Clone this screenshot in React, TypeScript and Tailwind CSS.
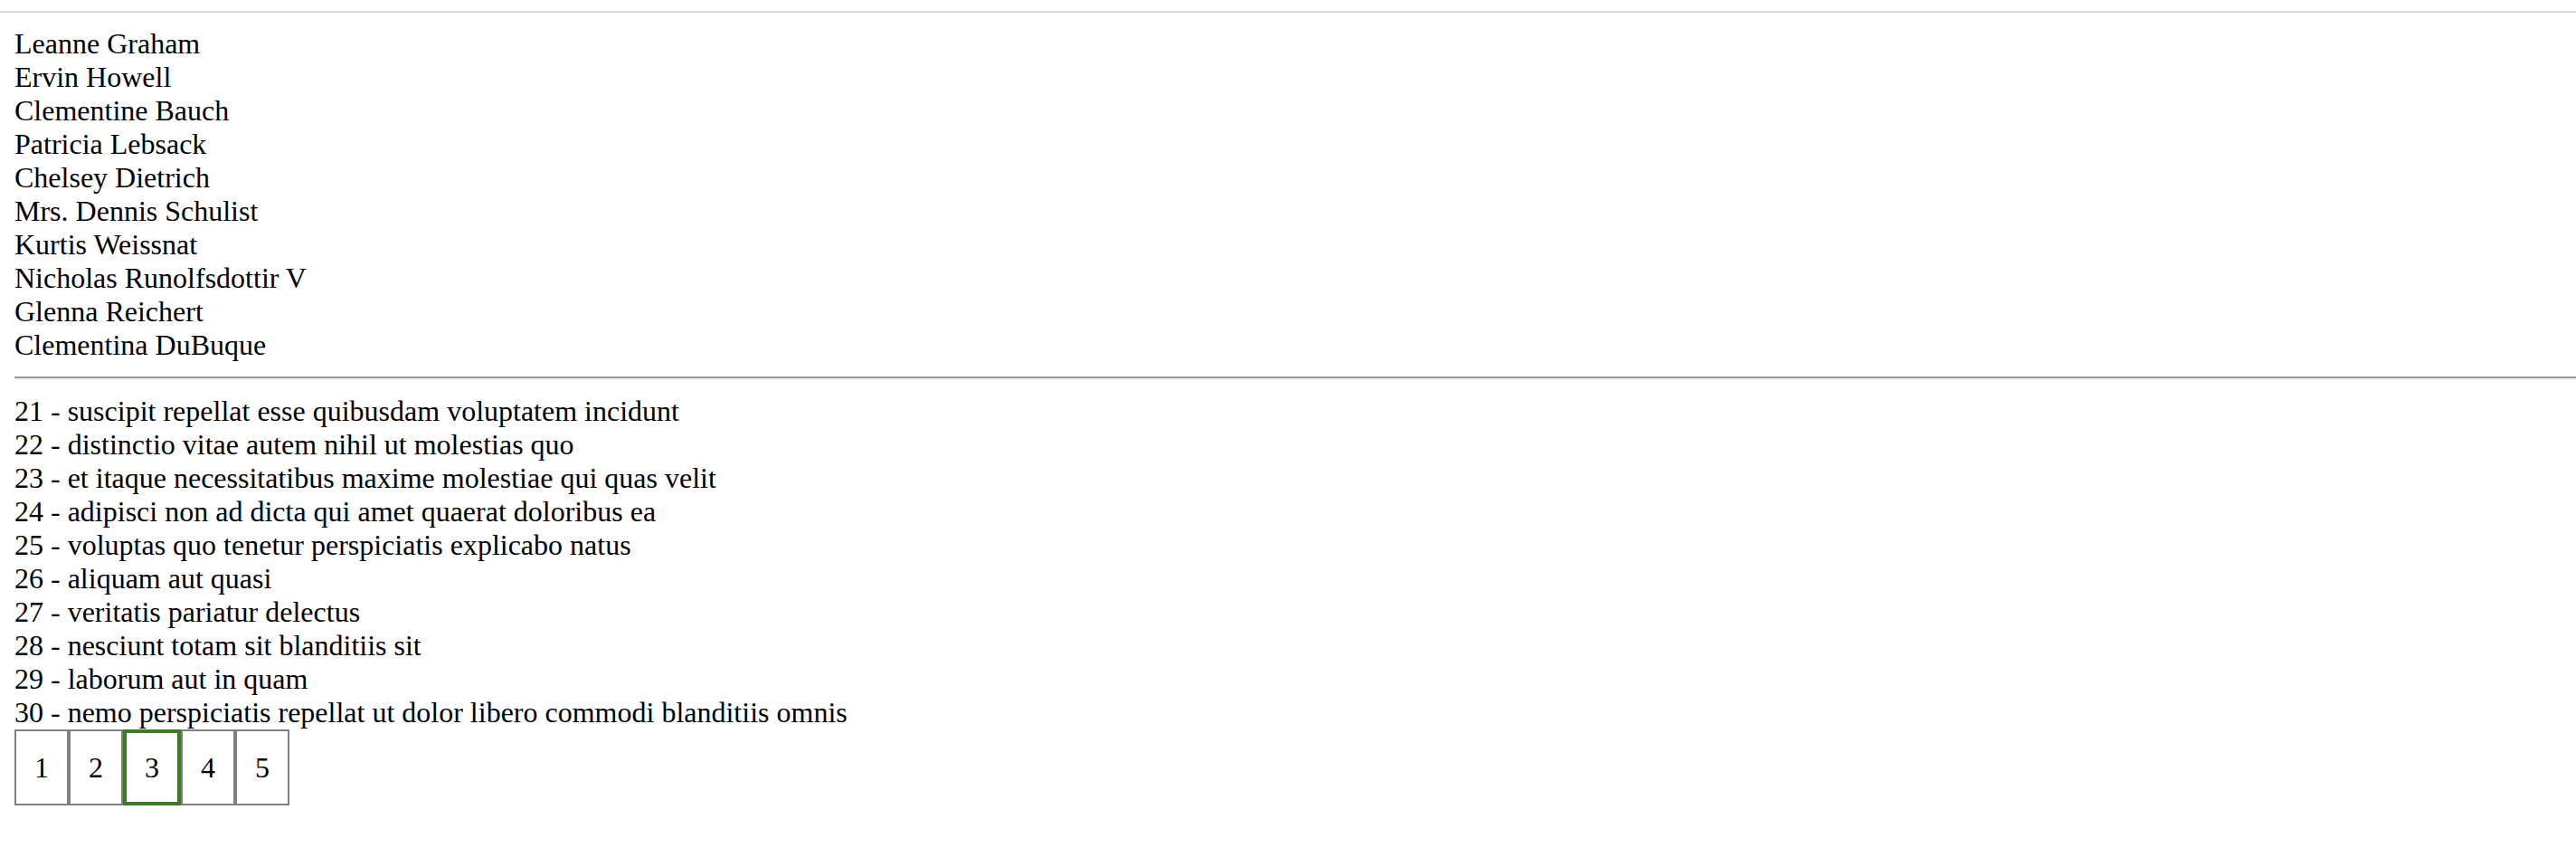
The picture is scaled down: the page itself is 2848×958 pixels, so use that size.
const users = [
  "Leanne Graham",
  "Ervin Howell",
  "Clementine Bauch",
  "Patricia Lebsack",
  "Chelsey Dietrich",
  "Mrs. Dennis Schulist",
  "Kurtis Weissnat",
  "Nicholas Runolfsdottir V",
  "Glenna Reichert",
  "Clementina DuBuque",
];

const posts = [
  { id: 21, title: "suscipit repellat esse quibusdam voluptatem incidunt" },
  { id: 22, title: "distinctio vitae autem nihil ut molestias quo" },
  { id: 23, title: "et itaque necessitatibus maxime molestiae qui quas velit" },
  { id: 24, title: "adipisci non ad dicta qui amet quaerat doloribus ea" },
  { id: 25, title: "voluptas quo tenetur perspiciatis explicabo natus" },
  { id: 26, title: "aliquam aut quasi" },
  { id: 27, title: "veritatis pariatur delectus" },
  { id: 28, title: "nesciunt totam sit blanditiis sit" },
  { id: 29, title: "laborum aut in quam" },
  { id: 30, title: "nemo perspiciatis repellat ut dolor libero commodi blanditiis omnis" },
];

const pages = [1, 2, 3, 4, 5];
const currentPage = 3;

export default function App() {
  return (
    <div className="min-h-screen bg-white font-['Liberation_Serif','Times_New_Roman',serif] text-[32px] leading-[37px] text-black">
      <div className="h-[14px] border-b-2 border-[#dadada]" />
      <div className="mt-4 pl-4">
        <ul>
          {users.map((name) => (
            <li key={name}>{name}</li>
          ))}
        </ul>
        <div className="my-4 border-t-2 border-b-2 border-t-[#9a9a9a] border-b-[#eeeeee]" />
        <ul>
          {posts.map((post) => (
            <li key={post.id}>
              {post.id} - {post.title}
            </li>
          ))}
        </ul>
        <div className="flex">
          {pages.map((page) => {
            const isActive = page === currentPage;
            return (
              <button
                key={page}
                className={[
                  "flex h-[84px] items-center justify-center bg-white text-[32px] leading-[37px] text-black",
                  isActive ? "w-[64px] border-4 border-[#3b7d24]" : "w-[60px] border-2 border-[#808080]",
                ].join(" ")}
              >
                {page}
              </button>
            );
          })}
        </div>
      </div>
    </div>
  );
}
